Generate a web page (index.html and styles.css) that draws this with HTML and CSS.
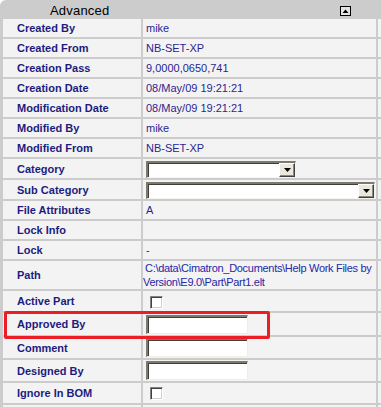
FILE: index.html
```html
<!DOCTYPE html>
<html>
<head>
<meta charset="utf-8">
<link rel="stylesheet" href="styles.css">
</head>
<body>
<div class="panel">
  <div class="head">
    <span class="title">Advanced</span>
    <svg class="toggle" width="11" height="10" viewBox="0 0 11 10">
      <rect x="0.5" y="0.5" width="10" height="9" fill="#e4e4e4" stroke="#000"/>
      <polygon points="2.5,7 5.5,3.5 8.5,7" fill="#000"/>
    </svg>
  </div>
  <div class="grid">
    <div class="lbl">Created By</div><div class="val">mike</div><div class="ext"></div>
    <div class="lbl">Created From</div><div class="val">NB-SET-XP</div><div class="ext"></div>
    <div class="lbl">Creation Pass</div><div class="val">9,0000,0650,741</div><div class="ext"></div>
    <div class="lbl">Creation Date</div><div class="val">08/May/09 19:21:21</div><div class="ext"></div>
    <div class="lbl">Modification Date</div><div class="val">08/May/09 19:21:21</div><div class="ext"></div>
    <div class="lbl">Modified By</div><div class="val">mike</div><div class="ext"></div>
    <div class="lbl">Modified From</div><div class="val">NB-SET-XP</div><div class="ext"></div>
    <div class="lbl">Category</div>
    <div class="val"><div class="sel sel-short"><span class="field"></span><span class="btn"><svg width="7" height="4" viewBox="0 0 7 4"><polygon points="0,0 7,0 3.5,4" fill="#000"/></svg></span></div></div>
    <div class="ext"></div>
    <div class="lbl">Sub Category</div>
    <div class="val"><div class="sel sel-long"><span class="field"></span><span class="btn"><svg width="7" height="4" viewBox="0 0 7 4"><polygon points="0,0 7,0 3.5,4" fill="#000"/></svg></span></div></div>
    <div class="ext"></div>
    <div class="lbl">File Attributes</div><div class="val">A</div><div class="ext"></div>
    <div class="lbl">Lock Info</div><div class="val"></div><div class="ext"></div>
    <div class="lbl">Lock</div><div class="val">-</div><div class="ext"></div>
    <div class="lbl">Path</div><div class="val path">C:\data\Cimatron_Documents\Help Work Files by<br>Version\E9.0\Part\Part1.elt</div><div class="ext"></div>
    <div class="lbl">Active Part</div><div class="val"><span class="chk"></span></div><div class="ext"></div>
    <div class="lbl">Approved By</div><div class="val"><span class="inp inp-first"></span></div><div class="ext"></div>
    <div class="lbl">Comment</div><div class="val"><span class="inp"></span></div><div class="ext"></div>
    <div class="lbl">Designed By</div><div class="val"><span class="inp"></span></div><div class="ext"></div>
    <div class="lbl">Ignore In BOM</div><div class="val"><span class="chk chk-low"></span></div><div class="ext"></div>
    <div class="lbl"></div><div class="val"></div><div class="ext"></div>
  </div>
  <div class="mark"></div>
</div>
</body>
</html>
```
FILE: styles.css
```css
body {
  margin: 0;
  background: #ffffff;
  overflow: hidden;
  font-family: "Liberation Sans", Arial, sans-serif;
}

.panel {
  width: 381px;
  position: relative;
}

.head {
  height: 19px;
  background: #cccccc;
  border-top-left-radius: 6px;
  display: flex;
  align-items: flex-start;
}

.title {
  margin-left: 50px;
  width: 290px;
  padding-top: 2px;
  line-height: 17px;
  font-size: 13px;
  letter-spacing: 0.2px;
  color: #000000;
}

.toggle {
  display: block;
  margin-top: 6px;
}

.grid {
  display: grid;
  grid-template-columns: 138px 233px 1fr;
  gap: 2px;
  padding: 0 0 0 3px;
  background: #cccccc;
}

.lbl {
  background: #f3f3f3;
  display: flex;
  align-items: center;
  min-height: 18px;
  padding-left: 14px;
  font-size: 11px;
  font-weight: bold;
  color: #1c1c7e;
}

.val {
  background: #f3f3f3;
  padding-left: 3px;
  font-size: 11px;
  line-height: 18px;
  color: #2a1f92;
  display: flex;
  align-items: flex-start;
  white-space: nowrap;
}

.ext {
  background: #f3f3f3;
}

.path {
  display: block;
  padding-left: 0;
  text-indent: 2px;
  line-height: 14px;
  letter-spacing: -0.3px;
  color: #2626a6;
}

.sel {
  box-sizing: border-box;
  height: 17px;
  margin: 2px 0 0;
  display: flex;
  background: #ffffff;
  border-style: solid;
  border-width: 2px 1px 1px 2px;
  border-color: #7c7a6c #f6f5ee #f6f5ee #7c7a6c;
  box-shadow: inset 1px 1px 0 #3f3e38;
}

.sel-short {
  width: 150px;
}

.sel-long {
  width: 229px;
}

.field {
  flex: 1;
}

.btn {
  box-sizing: border-box;
  width: 16px;
  height: 14px;
  background: #ebe9dd;
  border-style: solid;
  border-width: 1px;
  border-color: #ffffff #404040 #404040 #ffffff;
  box-shadow: inset -1px -1px 0 #8c8a80;
  display: flex;
  align-items: center;
  justify-content: center;
}

.btn svg {
  display: block;
}

.inp {
  box-sizing: border-box;
  width: 102px;
  height: 19px;
  margin: 1px 0 1px;
  background: #ffffff;
  border-style: solid;
  border-width: 2px 1px 1px 2px;
  border-color: #7c7a6c #f1efe4 #f1efe4 #7c7a6c;
  box-shadow: inset 1px 1px 0 #3f3e38;
}

.inp-first {
  margin-top: 2px;
}

.chk {
  box-sizing: border-box;
  width: 13px;
  height: 13px;
  margin: 5px 0 2px 4px;
  background: #ffffff;
  border: 1px solid;
  border-color: #848284 #ffffff #ffffff #848284;
  box-shadow: inset 1px 1px 0 #424142, inset -1px -1px 0 #d4d0c8;
}

.chk-low {
  margin-top: 4px;
  margin-bottom: 3px;
}

.mark {
  position: absolute;
  left: 4px;
  top: 311px;
  width: 266px;
  height: 28px;
  box-sizing: border-box;
  border: 3px solid #ec1d25;
  border-radius: 2px;
}
```
